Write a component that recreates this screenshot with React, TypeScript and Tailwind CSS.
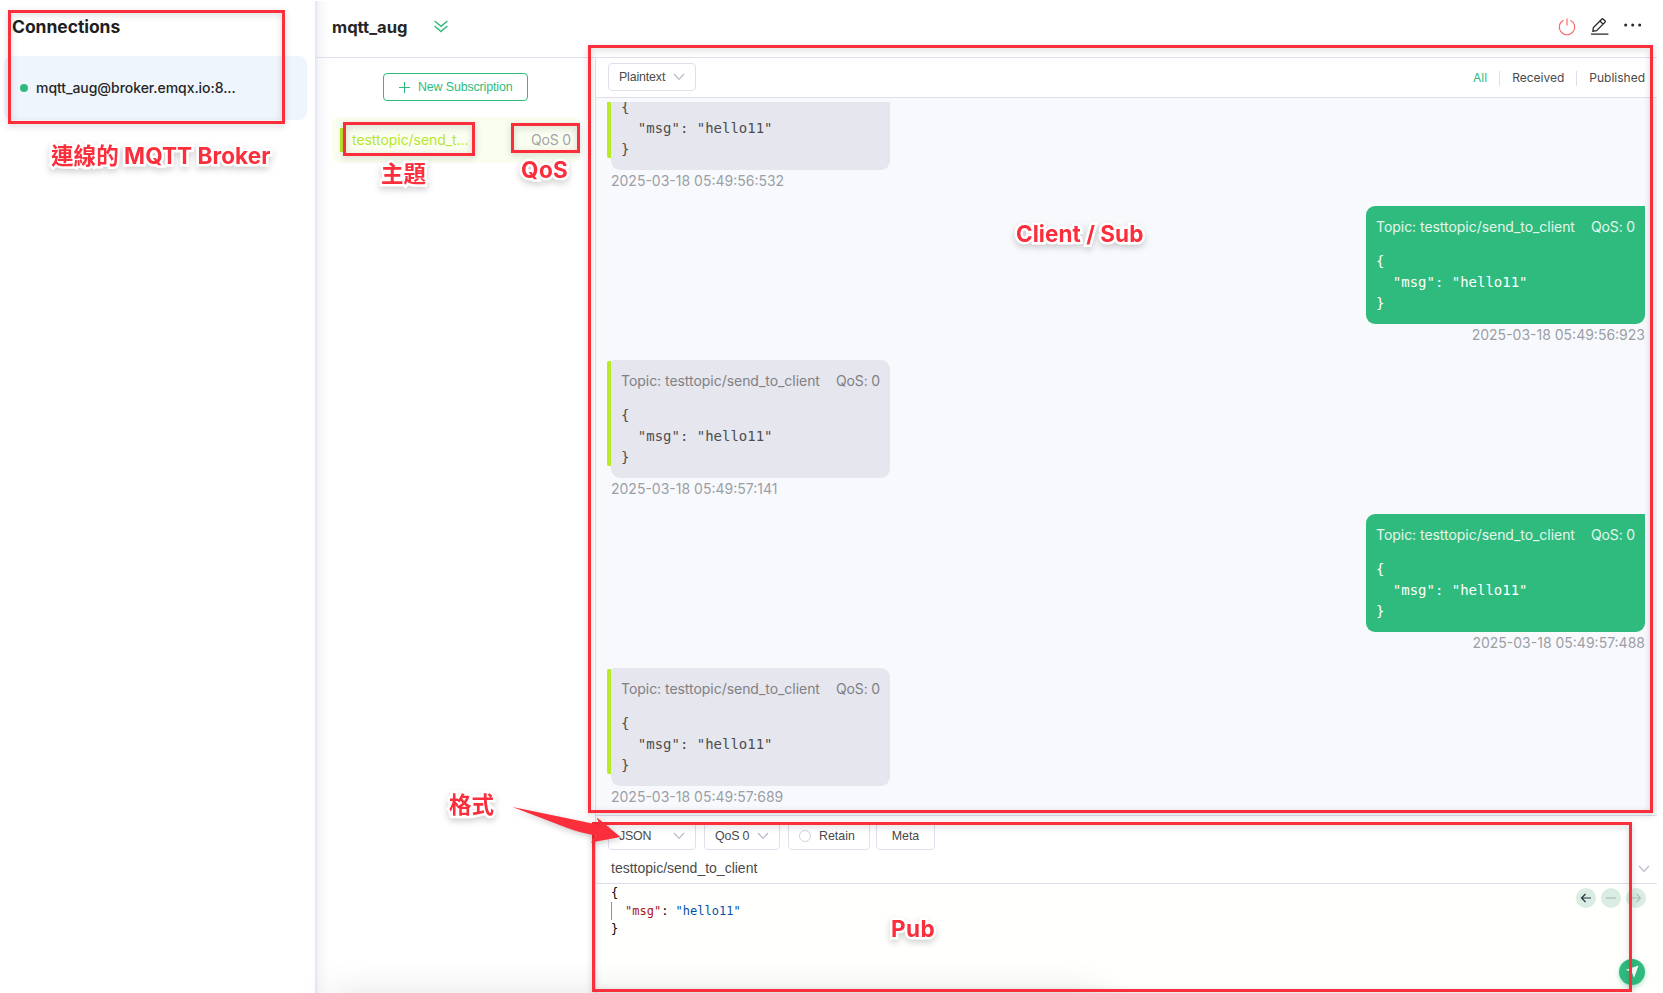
import React from "react";

const MONO = "font-['DejaVu_Sans_Mono',monospace]";
const SANS = "font-['Liberation_Sans',Arial,sans-serif]";

const messages = [
  { out: false, header: false, time: "2025-03-18 05:49:56:532" },
  { out: true, header: true, time: "2025-03-18 05:49:56:923" },
  { out: false, header: true, time: "2025-03-18 05:49:57:141" },
  { out: true, header: true, time: "2025-03-18 05:49:57:488" },
  { out: false, header: true, time: "2025-03-18 05:49:57:689" },
];

function Chevron({ className = "" }: { className?: string }) {
  return (
    <svg className={className} width="12" height="8" viewBox="0 0 12 8" fill="none" stroke="#b8bcc8" strokeWidth="1.3">
      <path d="M1 1l5 5.4L11 1" />
    </svg>
  );
}

function Message({ out, header, time }: { out: boolean; header: boolean; time: string }) {
  return (
    <div className={`flex h-[154px] shrink-0 flex-col ${out ? "items-end pr-3" : "items-start pl-[11px]"}`}>
      <div className="flex">
        {!out && <div className="mt-px h-[105px] w-1 shrink-0 rounded-l-[2px] bg-[#b8ea28]" />}
        <div
          className={`h-[118px] w-[279px] px-[10px] pt-[11px] ${
            out ? "rounded-[9px] rounded-tr-none bg-[#30bb7e] text-white" : "rounded-[9px] rounded-tl-[4px] bg-[#e6e6ee] text-[#4d4d4d]"
          }`}
        >
          <div className={`flex h-5 justify-between whitespace-nowrap text-[14px] leading-5 tracking-[-0.04px] ${out ? "text-[#e3f6ed]" : "text-[#808084]"}`}>
            {header && (
              <>
                <span>Topic: testtopic/send_to_client</span>
                <span className="tracking-[-0.15px]">QoS: 0</span>
              </>
            )}
          </div>
          <pre className={`${MONO} mt-[14px] text-[14px] leading-[21px] tracking-[-0.01px]`}>{'{\n  "msg": "hello11"\n}'}</pre>
        </div>
      </div>
      <div className={`mt-[2px] whitespace-nowrap text-[14px] leading-[18px] text-[#9a9fa6] ${out ? "" : "ml-1"}`}>{time}</div>
    </div>
  );
}

function Label({ children, className }: { children: React.ReactNode; className: string }) {
  return (
    <div
      className={`absolute whitespace-nowrap text-[22.5px] leading-7 font-bold text-[#fb2f3c] [-webkit-text-stroke:5px_white] [paint-order:stroke_fill] drop-shadow-[0_3px_3px_rgba(0,0,0,0.18)] ${className}`}
    >
      {children}
    </div>
  );
}

function Frame({ className }: { className: string }) {
  return <div className={`absolute border-[3px] border-[#fb2f3c] drop-shadow-[0_2px_3px_rgba(0,0,0,0.2)] ${className}`} />;
}

function RoundButton({ d, color }: { d: string; color: string }) {
  return (
    <div className="flex size-5 items-center justify-center rounded-full bg-[#d9ede2]">
      <svg width="12" height="12" viewBox="0 0 12 12" fill="none" stroke={color} strokeWidth="1.2">
        <path d={d} />
      </svg>
    </div>
  );
}

export default function App() {
  return (
    <div className="relative flex h-[993px] w-[1663px] overflow-hidden bg-white font-['Inter','Noto_Sans_CJK_TC',sans-serif]">
      <aside className="flex w-[315px] shrink-0 flex-col pl-1">
        <h1 className="mt-[14px] pl-2 text-[17.5px] leading-[26px] font-bold tracking-[-0.05px] text-[#1f1f1f]">Connections</h1>
        <div className="mt-4 flex h-16 w-[303px] items-center rounded-lg bg-[#eef5fc] pl-4">
          <span className="size-2 rounded-full bg-[#30bb7e]" />
          <span className="-mt-0.5 ml-2 text-[14px] font-medium tracking-[-0.05px] text-[#262626]">mqtt_aug@broker.emqx.io:8...</span>
        </div>
      </aside>

      <main className="mt-px flex w-[1342px] flex-col bg-[linear-gradient(to_right,#e0e2ee_0,#f3f4f9_3px,#fbfbfd_9px,#fff_15px)]">
        <header className="flex h-[57px] shrink-0 items-center border-b border-[#dfdfec] pl-[17px] pr-[15px]">
          <h2 className="-mt-1 text-[16.6px] font-bold text-[#262626]">mqtt_aug</h2>
          <svg className="-mt-[6px] ml-[26px]" width="14" height="13" viewBox="0 0 14 13" fill="none" stroke="#30bb7e" strokeWidth="1.5">
            <path d="M.6 1L7 6.3 13.4 1M.6 6L7 11.5 13.4 6" />
          </svg>
          <div className="-mt-[5px] ml-auto flex items-center gap-[15px]">
            <svg width="18" height="18" viewBox="0 0 18 18" fill="none" stroke="#f56c6c" strokeWidth="1.2">
              <path d="M5.5 2.2a7.7 7.7 0 1 0 7 0M9 .5v7" />
            </svg>
            <svg width="18" height="18" viewBox="0 0 18 18" fill="none" stroke="#262626" strokeWidth="1.3">
              <path d="M0 16.2h17.4M1.9 13.2l.5-3.7L10.7 1.2q.8-.8 1.6 0l1.6 1.6q.8.8 0 1.6L5.6 12.7zM9 3l3.1 3.1" />
            </svg>
            <svg width="18" height="18" viewBox="0 0 18 18" fill="#262626">
              <circle cx="1.7" cy="7" r="1.5" />
              <circle cx="8.7" cy="7" r="1.5" />
              <circle cx="15.7" cy="7" r="1.5" />
            </svg>
          </div>
        </header>

        <div className="flex min-h-0 flex-1">
          <section className="flex w-[280px] shrink-0 flex-col pl-[17px]">
            <button className={`${SANS} mt-[15px] ml-[51px] flex h-7 w-[145px] items-center rounded-[4px] border border-[#30bb7e] pl-[15px] text-[12.4px] text-[#30bb7e]`}>
              <svg width="11" height="11" viewBox="0 0 11 11" stroke="#30bb7e" strokeWidth="1.1">
                <path d="M5.5 0v11M0 5.5h11" />
              </svg>
              <span className="ml-2 whitespace-nowrap tracking-[-0.12px]">New Subscription</span>
            </button>
            <div className="mt-4 flex h-[46px] w-[248px] items-center rounded-lg bg-[#fafef0] pl-2 text-[14px]">
              <span className="h-6 w-1 bg-[#b8ea28]" />
              <span className="-mt-px ml-2 tracking-[-0.05px] text-[#b8e62e]">testtopic/send_t...</span>
              <span className="-mt-px mr-[9px] ml-auto tracking-[-0.15px] text-[#a0a4aa]">QoS 0</span>
            </div>
          </section>

          <section className="flex w-[1062px] flex-col border-l border-[#dfdfec]">
            <div className="flex h-10 shrink-0 items-center border-b border-[#dfdfec] bg-white pr-3 pl-3">
              <div className={`${SANS} -mt-px flex h-7 w-[88px] items-center rounded-[4px] border border-[#dfdfec] pl-[10px] text-[12.4px] text-[#4a4a4a]`}>
                <span className="tracking-[-0.15px]">Plaintext</span>
                <Chevron className="mr-[10px] ml-auto" />
              </div>
              <div className="ml-auto flex items-center pt-px text-[12px] text-[#4a4a4a]">
                <span className="text-[#30bb7e]">All</span>
                <span className="mx-3 h-[15px] w-px bg-[#dfdfec]" />
                <span>Received</span>
                <span className="mx-3 h-[15px] w-px bg-[#dfdfec]" />
                <span>Published</span>
              </div>
            </div>

            <div className="flex h-[718px] shrink-0 flex-col border-b border-[#dfdfec] bg-[#f8f9fd] pt-1">
              <div className="flex min-h-0 flex-1 flex-col justify-end overflow-hidden">
                <div className="-mb-[7px] flex flex-col">
                  {messages.map((m) => (
                    <Message key={m.time} {...m} />
                  ))}
                </div>
              </div>
            </div>

            <div className="flex h-[68px] shrink-0 flex-col border-b border-[#dfdfec] bg-white pl-3">
              <div className={`${SANS} mt-[6px] flex h-7 shrink-0 text-[12.4px] text-[#4a4a4a]`}>
                <div className="flex w-[88px] items-center rounded-[4px] border border-[#dfdfec] pl-[10px]">
                  <span className="tracking-[-0.2px]">JSON</span>
                  <Chevron className="mr-[10px] ml-auto" />
                </div>
                <div className="ml-2 flex w-[76px] items-center rounded-[4px] border border-[#dfdfec] pl-[10px]">
                  <span className="tracking-[-0.2px]">QoS 0</span>
                  <Chevron className="mr-[10px] ml-auto" />
                </div>
                <div className="ml-2 flex w-[82px] items-center rounded-[4px] border border-[#dfdfec] pl-[10px]">
                  <span className="mr-2 size-3 rounded-full border border-[#d2d2e2]" />
                  Retain
                </div>
                <div className="ml-[6px] flex w-[59px] items-center justify-center rounded-[4px] border border-[#dfdfec]">Meta</div>
              </div>
              <div className={`${SANS} flex flex-1 items-center pt-1 pr-[7px] pl-[3px] text-[14px] text-[#4a4a4a]`}>
                testtopic/send_to_client
                <Chevron className="ml-auto" />
              </div>
            </div>

            <div className="flex flex-1 justify-between bg-[#fffffd] pl-[15px]">
              <pre className={`${MONO} text-[12px] leading-[18px] text-black`}>
                {"{\n"}
                <span className="inline-block border-l border-[#939393] pl-[13px]">
                  <span className="text-[#a31515]">"msg"</span>: <span className="text-[#0451a5]">"hello11"</span>
                </span>
                {"\n}"}
              </pre>
              <div className="flex w-[81px] flex-col pt-1">
                <div className="flex gap-[5px]">
                  <RoundButton color="#263445" d="M11 6H1.5M5.5 2L1.5 6l4 4" />
                  <RoundButton color="#afbdb9" d="M1 6h10" />
                  <RoundButton color="#afbdb9" d="M1 6h9.5M6.5 2l4 4-4 4" />
                </div>
                <div className="mt-[51px] ml-[43px] flex size-[26px] items-center justify-center rounded-full bg-[#30bb7e] shadow-[0_2px_5px_rgba(48,187,126,0.4)]">
                  <svg width="14" height="14" viewBox="0 0 14 14" fill="#fff">
                    <path d="M13.5.5L9 13 7 7.4.8 4.8z" />
                  </svg>
                </div>
              </div>
            </div>
          </section>
        </div>
      </main>

      <div className="absolute top-[1000px] left-[330px] h-10 w-[770px] shadow-[0_0_40px_rgba(0,0,0,0.16)]" />

      <Frame className="top-[10px] left-[8px] h-[114px] w-[277px]" />
      <Frame className="top-[122px] left-[343px] h-[34px] w-[132px]" />
      <Frame className="top-[123px] left-[511px] h-[30px] w-[69px]" />
      <Frame className="top-[45px] left-[588px] h-[768px] w-[1065px]" />
      <Frame className="top-[822px] left-[592px] h-[170px] w-[1040px]" />

      <Label className="top-[142px] left-[51px] tracking-[0.07px]">連線的 MQTT Broker</Label>
      <Label className="top-[160px] left-[381px]">主題</Label>
      <Label className="top-[156px] left-[521px] tracking-[0.4px]">QoS</Label>
      <Label className="top-[220px] left-[1016px] tracking-[0.05px]">Client / Sub</Label>
      <Label className="top-[791px] left-[449px]">格式</Label>
      <Label className="top-[915px] left-[891px] tracking-[0.4px]">Pub</Label>
      <svg className="absolute top-[800px] left-[505px] drop-shadow-[0_2px_3px_rgba(0,0,0,0.2)]" width="120" height="50" viewBox="0 0 120 50">
        <path d="M7.5 7L61 18L94.5 25L91.7 17.3L115.5 37L86 42.5L91 35.5Q75 33 61 27.5Z" fill="#fb2f3c" />
      </svg>
    </div>
  );
}
